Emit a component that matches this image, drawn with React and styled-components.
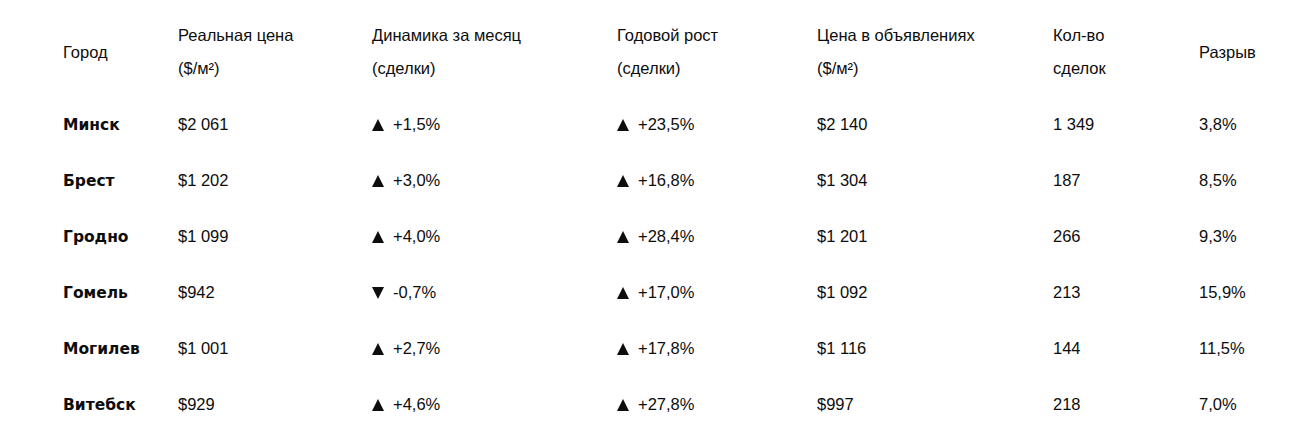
import React from 'react';
import styled, { createGlobalStyle } from 'styled-components';

const GlobalStyle = createGlobalStyle`
  html, body {
    margin: 0;
    padding: 0;
    background: #ffffff;
  }
  body {
    font-family: "Liberation Sans", Arial, sans-serif;
    color: #0d0d0d;
  }
`;

const COLS = '115px 194px 245px 200px 236px 146px 1fr';

const Wrapper = styled.div`
  padding: 19px 0 0 63px;
  width: 1306px;
  box-sizing: border-box;
`;

const HeadRow = styled.div`
  display: grid;
  grid-template-columns: ${COLS};
  height: 66px;
  margin-bottom: 11px;
`;

const HeadCell = styled.div`
  display: flex;
  align-items: center;
  font-size: 16.5px;
  line-height: 33px;
  white-space: pre-line;
`;

const Row = styled.div`
  display: grid;
  grid-template-columns: ${COLS};
  height: 56px;
  align-items: center;
`;

const Cell = styled.div`
  font-size: 16.5px;
  font-weight: ${(p) => (p.$bold ? 700 : 400)};
  font-family: ${(p) => (p.$bold ? '"DejaVu Sans", Verdana, sans-serif' : 'inherit')};
  ${(p) => p.$bold && 'font-size: 15.5px; padding-top: 1px;'}
`;

const Arrow = styled.span`
  display: inline-block;
  width: 0;
  height: 0;
  margin-right: 9px;
  border-left: 6px solid transparent;
  border-right: 6px solid transparent;
  vertical-align: -1px;
  ${(p) =>
    p.$down
      ? 'border-top: 12px solid #0d0d0d;'
      : 'border-bottom: 12px solid #0d0d0d;'}
`;

const headers = [
  'Город',
  'Реальная цена\n($/м²)',
  'Динамика за месяц\n(сделки)',
  'Годовой рост\n(сделки)',
  'Цена в объявлениях\n($/м²)',
  'Кол-во\nсделок',
  'Разрыв',
];

const rows = [
  ['Минск', '$2 061', '+1,5%', '+23,5%', '$2 140', '1 349', '3,8%'],
  ['Брест', '$1 202', '+3,0%', '+16,8%', '$1 304', '187', '8,5%'],
  ['Гродно', '$1 099', '+4,0%', '+28,4%', '$1 201', '266', '9,3%'],
  ['Гомель', '$942', '-0,7%', '+17,0%', '$1 092', '213', '15,9%'],
  ['Могилев', '$1 001', '+2,7%', '+17,8%', '$1 116', '144', '11,5%'],
  ['Витебск', '$929', '+4,6%', '+27,8%', '$997', '218', '7,0%'],
];

const Change = ({ value }) => (
  <>
    <Arrow $down={value.startsWith('-')} />
    {value}
  </>
);

export default function App() {
  return (
    <>
      <GlobalStyle />
      <Wrapper>
        <HeadRow>
          {headers.map((h) => (
            <HeadCell key={h}>{h}</HeadCell>
          ))}
        </HeadRow>
        {rows.map((r) => (
          <Row key={r[0]}>
            <Cell $bold>{r[0]}</Cell>
            <Cell>{r[1]}</Cell>
            <Cell><Change value={r[2]} /></Cell>
            <Cell><Change value={r[3]} /></Cell>
            <Cell>{r[4]}</Cell>
            <Cell>{r[5]}</Cell>
            <Cell>{r[6]}</Cell>
          </Row>
        ))}
      </Wrapper>
    </>
  );
}
